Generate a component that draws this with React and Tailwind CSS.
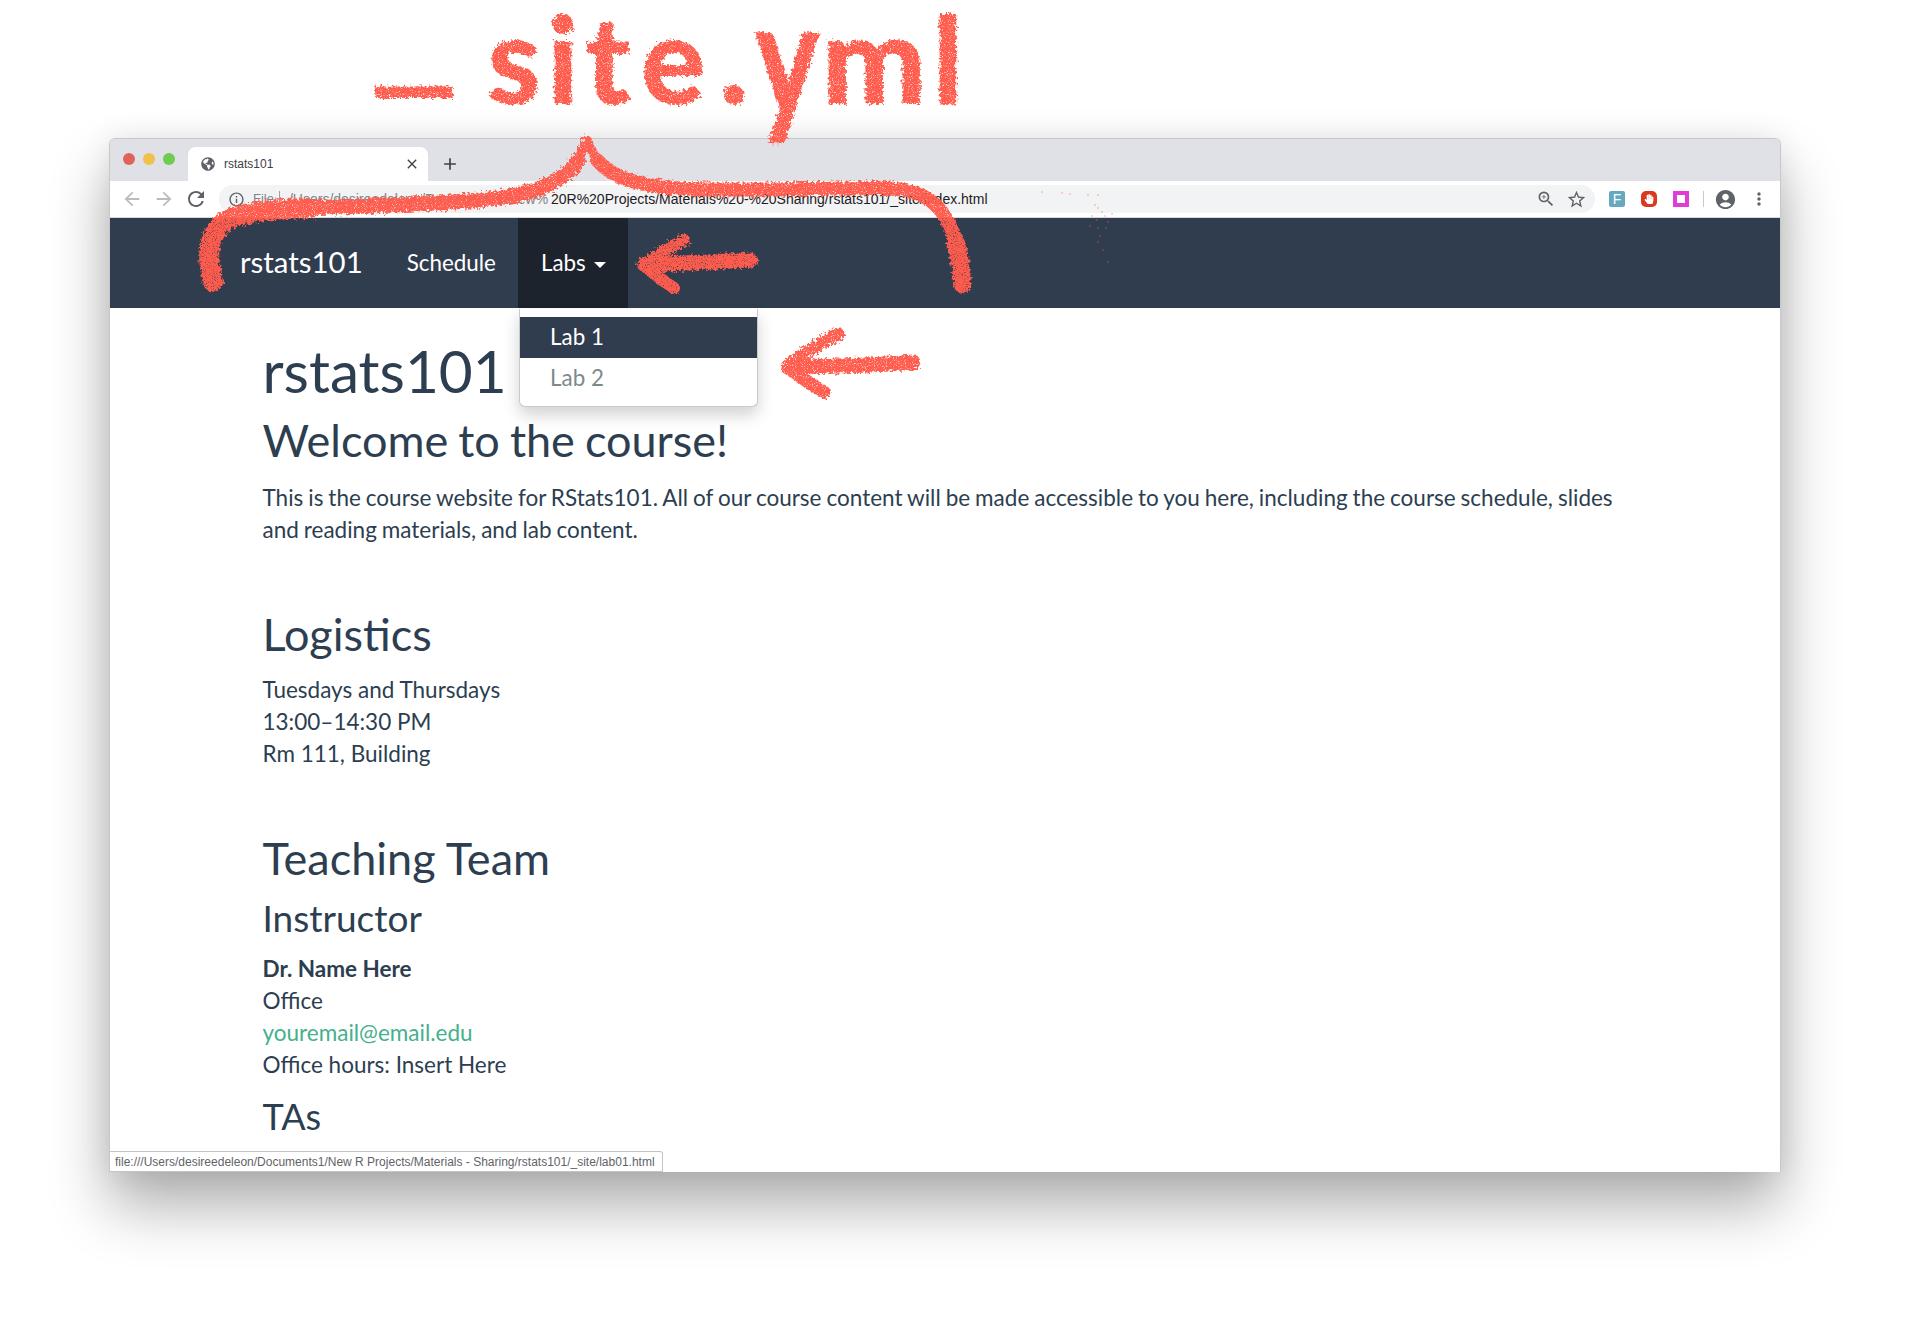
import React from 'react';
import { MdArrowBack, MdArrowForward, MdRefresh, MdInfoOutline, MdZoomIn, MdStarBorder, MdAccountCircle, MdMoreVert, MdClose, MdAdd } from 'react-icons/md';
import { FaGlobeAmericas, FaHandPaper } from 'react-icons/fa';

const Lato = "font-['Lato','Noto_Sans',sans-serif]";

// the hand written title, one cell per letter so each sits where it was drawn
const letters = [
    { c: '_', cls: 'w-[136px] scale-x-[1.6] -translate-y-[23px]' },
    { c: 's', cls: 'w-[64px]' },
    { c: 'i', cls: 'w-[34px]' },
    { c: 't', cls: 'w-[56px]' },
    { c: 'e', cls: 'w-[74px]' },
    { c: '.', cls: 'w-[48px]' },
    { c: 'y', cls: 'w-[58px] scale-y-[1.35] origin-[50%_60%]' },
    { c: 'm', cls: 'w-[116px] scale-x-[1.05]' },
    { c: 'l', cls: 'w-[32px]' },
];

const specks = [[1042, 192], [1062, 193], [1070, 194], [1088, 195], [1095, 205], [1098, 195], [1092, 216], [1098, 208], [1102, 212], [1090, 226], [1098, 228], [1105, 216], [1112, 214], [1097, 220], [1108, 222], [1096, 218], [1098, 242], [1106, 228], [1103, 250], [1108, 262], [1100, 236]];

const Toolbar = () => (
    <div className="h-[37px] bg-white flex items-center border-b border-[#d6d8dc] shrink-0">
        <MdArrowBack className="ml-[11px] text-[22px] text-[#b9bbbe]" />
        <MdArrowForward className="ml-[10px] text-[22px] text-[#b9bbbe]" />
        <MdRefresh className="ml-[9px] text-[24px] text-[#5f6368]" />
        <div className="ml-[11px] w-[1376px] h-[28px] rounded-full bg-[#f1f3f4] flex items-center font-['Liberation_Sans',sans-serif] text-[14px] whitespace-nowrap">
            <MdInfoOutline className="ml-[9px] text-[17px] text-[#5f6368]" />
            <span className="ml-[8px] text-[#80868b] text-[13px]">File</span>
            <span className="ml-[5px] h-[16px] w-px bg-[#9aa0a6]"></span>
            <span className="ml-[9px] text-[#80868b] inline-block w-[262px] overflow-hidden">/Users/desireedeleon/Documents1/New%</span>
            <span className="text-[#1f2023]">20R%20Projects/Materials%20-%20Sharing/rstats101/_site/index.html</span>
            <MdZoomIn className="ml-auto text-[20px] text-[#5f6368]" />
            <MdStarBorder className="ml-[10px] mr-[8px] text-[21px] text-[#5f6368]" />
        </div>
        <div className="ml-[14px] w-[16px] h-[16px] rounded-[2px] bg-[#64a9c0] flex items-center justify-center text-white text-[14px] leading-none font-['Liberation_Sans',sans-serif]">F</div>
        <div className="ml-[16px] w-[16px] h-[16px] rounded-[5px] bg-[#d9391f] flex items-center justify-center">
            <FaHandPaper className="text-[10px] text-white" />
        </div>
        <div className="ml-[16px] w-[16px] h-[16px] bg-[#e03cd8] flex items-center justify-center">
            <div className="w-[8px] h-[8px] bg-white"></div>
        </div>
        <div className="ml-[14px] w-px h-[16px] bg-[#c8cacd]"></div>
        <MdAccountCircle className="ml-[10px] text-[23px] text-[#5f6368]" />
        <MdMoreVert className="ml-[12px] text-[20px] text-[#5f6368]" />
    </div>
);

const TabStrip = () => (
    <div className="h-[42px] bg-[#dfe1e6] flex items-end shrink-0">
        <div className="flex items-center gap-[8px] pl-[13px] pt-[14px] self-start">
            <span className="w-[12px] h-[12px] rounded-full bg-[#e0635a]"></span>
            <span className="w-[12px] h-[12px] rounded-full bg-[#f0c04c]"></span>
            <span className="w-[12px] h-[12px] rounded-full bg-[#6fcb52]"></span>
        </div>
        <div className="ml-[13px] w-[240px] h-[34px] bg-white rounded-t-[8px] flex items-center font-['Liberation_Sans',sans-serif]">
            <FaGlobeAmericas className="ml-[13px] text-[14px] text-[#5f6368]" />
            <span className="ml-[9px] text-[12px] text-[#3c4043]">rstats101</span>
            <MdClose className="ml-auto mr-[8px] text-[16px] text-[#3c4043]" />
        </div>
        <MdAdd className="ml-[12px] mb-[7px] text-[20px] text-[#3c4043]" />
    </div>
);

const Navbar = () => (
    <div className="h-[90px] bg-[#2f3d4f] flex items-stretch text-white shrink-0 pl-[130px]">
        <div className="flex items-center text-[29.4px] pb-[2px]">rstats101</div>
        <div className="ml-[44px] flex items-center text-[22.4px]">Schedule</div>
        <div className="ml-[22px] w-[110px] bg-[#1c232d] flex items-center pl-[23px] text-[22.4px]">
            Labs
            <span className="ml-[8px] mt-[4px] border-x-[6px] border-x-transparent border-t-[6px] border-t-white"></span>
        </div>
    </div>
);

const Dropdown = () => (
    <div className="absolute left-[409px] top-[170px] w-[239px] h-[98px] bg-white border border-[#c9c9c9] border-t-0 rounded-b-[6px] shadow-[0_8px_16px_rgba(0,0,0,0.18)] pt-[8px] text-[22.4px]">
        <div className="h-[41px] bg-[#2f3d4f] text-white flex items-center pl-[30px] pb-[1px]">Lab 1</div>
        <div className="h-[41px] text-[#7b8a8b] flex items-center pl-[30px] pb-[1px]">Lab 2</div>
    </div>
);

const Content = () => (
    <div className="pl-[152.5px] w-[1529px] text-[22.5px] leading-[32px] text-[#2c3e50]">
        <h1 className="text-[58.5px] leading-[63px] mt-[31px]">rstats101</h1>
        <h2 className="text-[45px] leading-[50px] mt-[13px] [word-spacing:-1.5px]">Welcome to the course!</h2>
        <p className="mt-[17px] [word-spacing:-0.8px]">This is the course website for RStats101. All of our course content will be made accessible to you here, including the course schedule, slides and reading materials, and lab content.</p>
        <h2 className="text-[45px] leading-[50px] mt-[63px]">Logistics</h2>
        <p className="mt-[15px]">Tuesdays and Thursdays<br />13:00–14:30 PM<br />Rm 111, Building</p>
        <h2 className="text-[45px] leading-[50px] mt-[63px]">Teaching Team</h2>
        <h3 className="text-[37px] leading-[40px] mt-[15px]">Instructor</h3>
        <p className="mt-[15px]">
            <strong className="font-bold">Dr. Name Here</strong><br />
            Office<br />
            <span className="text-[#45b08c]">youremail@email.edu</span><br />
            Office hours: Insert Here
        </p>
        <h3 className="text-[36px] leading-[40px] mt-[15px]">TAs</h3>
    </div>
);

const Annotations = () => (
    <>
        <svg className="absolute left-0 top-0 pointer-events-none" width="1907" height="1327" fill="none" stroke="#ff5c4d" strokeLinecap="round" strokeLinejoin="round">
            <defs>
                <filter id="crayon" x="-5%" y="-5%" width="110%" height="110%">
                    <feTurbulence type="fractalNoise" baseFrequency="0.35" numOctaves="3" seed="4" result="noise" />
                    <feDisplacementMap in="SourceGraphic" in2="noise" scale="8" result="rough" />
                    <feTurbulence type="fractalNoise" baseFrequency="0.9" numOctaves="2" seed="9" />
                    <feColorMatrix type="matrix" values="0 0 0 0 0  0 0 0 0 0  0 0 0 0 0  3 0 0 0 -0.35" result="grain" />
                    <feComposite in="rough" in2="grain" operator="in" />
                </filter>
            </defs>
            <g filter="url(#crayon)">
                <path strokeWidth="20" d="M213 282 C206 255 208 236 224 222 C240 212 270 209 310 208" />
                <path strokeWidth="15" d="M310 208 C360 206 420 205 480 200 C530 196 565 183 578 160" />
                <path strokeWidth="9" d="M578 160 C582 152 585 145 587 140 C590 147 592 153 597 160" />
                <path strokeWidth="14" d="M597 160 C612 178 640 187 690 189 C750 191 830 188 880 188 C925 188 945 205 955 240" />
                <path strokeWidth="18" d="M955 240 C960 258 962 272 962 284" />
                <path strokeWidth="15" d="M645 265 C680 263 715 262 750 260" />
                <path strokeWidth="12" d="M684 240 C668 248 655 256 644 265 C654 274 664 282 674 288" />
                <path strokeWidth="15" d="M788 367 C830 366 875 366 913 362" />
                <path strokeWidth="13" d="M838 334 C820 344 800 355 787 367 C800 377 814 386 824 392" />
            </g>
            <g fill="#ff5c4d" stroke="none" opacity="0.35">
                {specks.map(([x, y]) => <circle key={`${x}-${y}`} cx={x} cy={y} r="1" />)}
            </g>
        </svg>
        <div className={`absolute left-[346px] top-0 flex items-baseline text-[118px] leading-[116px] font-bold text-[#ff5c4d] whitespace-nowrap pointer-events-none [filter:url(#crayon)] [-webkit-text-stroke:2px_#ff5c4d] ${Lato}`}>
            {letters.map((l) => <span key={l.c} className={`flex justify-center ${l.cls}`}>{l.c}</span>)}
        </div>
    </>
);

const App = () => {
    return (
        <div className={`relative h-[1327px] w-[1907px] bg-white overflow-hidden pt-[138px] pl-[109px] ${Lato}`}>
            <div className="relative w-[1672px] h-[1034px] flex flex-col overflow-hidden bg-white rounded-t-[6px] border border-[#c8c8c8] border-b-0 shadow-[0_34px_60px_rgba(0,0,0,0.32),0_0_28px_rgba(0,0,0,0.08)]">
                <TabStrip />
                <Toolbar />
                <Navbar />
                <Content />
                <Dropdown />
                <div className="absolute left-0 bottom-0 h-[21px] w-[553px] bg-white border border-[#c4c4c4] border-l-0 rounded-tr-[3px] pl-[5px] flex items-center text-[12px] text-[#5f6368] font-['Liberation_Sans',sans-serif] whitespace-nowrap">
                    file:///Users/desireedeleon/Documents1/New R Projects/Materials - Sharing/rstats101/_site/lab01.html
                </div>
            </div>
            <Annotations />
        </div>
    );
};

export default App;
